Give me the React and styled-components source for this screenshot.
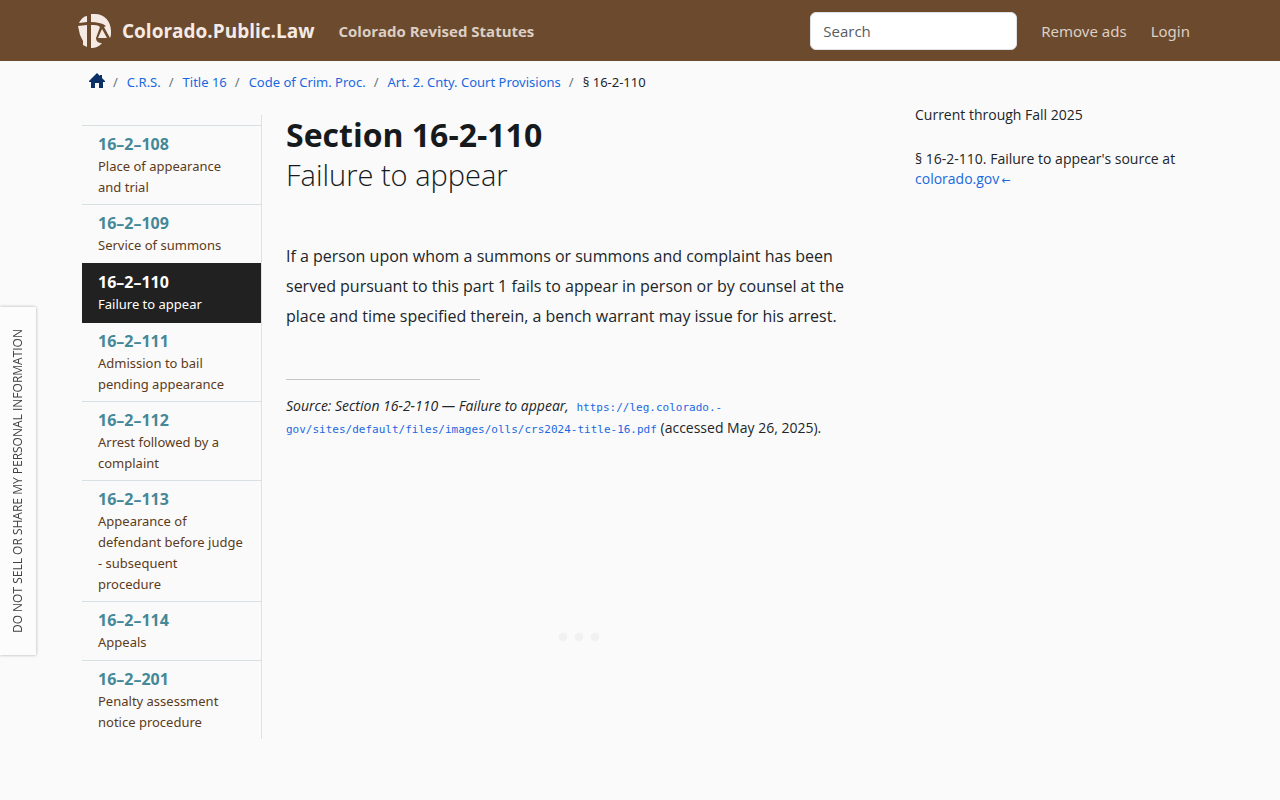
import styled, { createGlobalStyle } from "styled-components"

const GlobalStyle = createGlobalStyle`
    * {
        box-sizing: border-box;
    }
    body {
        margin: 0;
        background-color: #fafafa;
        color: #212529;
        font-family: "Open Sans", "Segoe UI", sans-serif;
        font-size: 15px;
        line-height: 24px;
    }
    a {
        color: #1a68e0;
        text-decoration: none;
    }
`

const Container = styled.div`
    max-width: 1140px;
    margin: 0 auto;
    padding: 0 12px;
`

const Header = styled.header`
    background-color: #6c4a2e;
`

const Navbar = styled(Container)`
    display: flex;
    align-items: center;
    height: 61px;
    padding: 0 8px;
`

const Brand = styled.a`
    display: flex;
    align-items: center;
    gap: 10px;
    color: #f5ebe4;
    font-size: 19px;
    font-weight: 700;
`

const NavLink = styled.a`
    margin-left: 24px;
    color: #dccfc4;
    font-weight: ${({ $bold }) => ($bold ? 700 : 400)};
`

const SearchForm = styled.form`
    margin-left: auto;
`

const SearchInput = styled.input`
    display: block;
    width: 207px;
    height: 38px;
    padding: 0 12px;
    border: 1px solid #dee2e6;
    border-radius: 6px;
    background-color: #fff;
    font: inherit;

    &::placeholder {
        color: #595c5f;
        opacity: 1;
    }
`

const LoginLinks = styled.div`
    padding-right: 12px;
    font-family: "Noto Sans", "Segoe UI", sans-serif;
`

const Breadcrumb = styled.ol`
    display: flex;
    align-items: center;
    height: 42px;
    margin: 0 0 2px;
    padding: 0 7px;
    list-style: none;
    font-family: "Noto Sans", "Segoe UI", sans-serif;
    font-size: 13px;

    li + li::before {
        content: "/";
        padding: 0 9px 0 8px;
        color: #6c757d;
    }
    svg {
        display: block;
    }
`

const Layout = styled.div`
    display: grid;
    grid-template-columns: 180px minmax(0, 1fr) 283px;
    column-gap: 24px;
    align-items: start;
`

const SideNav = styled.nav`
    margin-top: 10px;
    padding-top: 10px;
    border-right: 1px solid #dee2e6;
`

const SideItem = styled.a`
    display: block;
    min-height: 59px;
    padding: 8px 16px 6px;
    border-top: 1px solid #d9e0e3;
    color: #5c3a21;
    font-family: "Noto Sans", "Segoe UI", sans-serif;
    font-size: 13px;
    line-height: 21px;
    white-space: pre-line;

    strong {
        display: block;
        margin-bottom: 1px;
        color: #458898;
        font-family: "Open Sans", "Segoe UI", sans-serif;
        font-size: 16px;
        line-height: 21px;
    }

    &[aria-current="page"] {
        border-top-color: #212121;
        background-color: #212121;
        color: #fff;
    }
    &[aria-current="page"] strong {
        color: #fff;
    }
    &[aria-current="page"] + a {
        border-top-color: #212121;
    }
`

const Main = styled.main`
    margin-top: 10px;
    padding-right: 20px;
`

const Title = styled.h1`
    margin: 0 0 46px;
    color: #161a1d;
    font-size: 32px;
    font-weight: 700;
    line-height: 40px;
`

const Subtitle = styled.span`
    display: block;
    font-size: 29px;
    font-weight: 300;
`

const Statute = styled.p`
    margin: 0 0 48px;
    font-size: 16px;
    line-height: 30px;
`

const Rule = styled.hr`
    width: 194px;
    margin: 0 0 15px;
    border: 0;
    border-top: 1px solid #c4c5c6;
`

const Source = styled.p`
    margin: 0;
    font-size: 14px;
    line-height: 22px;

    a {
        margin-left: 4px;
        font-family: "DejaVu Sans Mono", monospace;
        font-size: 11px;
        line-height: 16px;
    }
`

const Aside = styled.aside`
    font-size: 14px;
    line-height: 20px;

    p {
        margin: 0 0 24px;
    }
    small {
        margin-left: 2px;
        font-family: "DejaVu Sans", sans-serif;
        font-size: 11px;
        line-height: 16px;
    }
`

const Dots = styled.div`
    display: flex;
    gap: 8px;
    justify-content: center;
    margin-top: 194px;

    span {
        width: 8px;
        height: 8px;
        border-radius: 50%;
        background-color: #f1f1f1;
    }
`

const PrivacyTab = styled.button`
    position: fixed;
    left: 0;
    top: 307px;
    width: 36px;
    padding: 22px 0;
    border: 0;
    background-color: #fcfcfc;
    box-shadow: 0 0 3px rgba(0, 0, 0, 0.3);
    color: #404040;
    font-family: inherit;
    font-size: 12px;
    line-height: 36px;
    text-transform: uppercase;
    writing-mode: vertical-rl;

    span {
        display: block;
        transform: rotate(180deg);
    }
`

const crumbs = ["C.R.S.", "Title 16", "Code of Crim. Proc.", "Art. 2. Cnty. Court Provisions"]

const sections = [
    { number: "16–2–108", title: "Place of appearance and trial" },
    { number: "16–2–109", title: "Service of summons" },
    { number: "16–2–110", title: "Failure to appear", active: true },
    { number: "16–2–111", title: "Admission to bail pending appearance" },
    { number: "16–2–112", title: "Arrest followed by a complaint" },
    { number: "16–2–113", title: "Appearance of defendant before judge - subsequent\nprocedure" },
    { number: "16–2–114", title: "Appeals" },
    { number: "16–2–201", title: "Penalty assessment notice procedure" },
]

// scales of justice inside a disc
const Logo = () => (
    <svg width="34" height="34" viewBox="0 0 34 34" fill="#f5ebe4" aria-hidden="true">
        <path d="M1 9 C3 5 6 2 9 2 V8 Z" />
        <path d="M13 0 H17 C26 0 33 7 33 17 C33 20 33 22 32 24 L26 13 L28 12 C24 9 19 8 13 8 Z" />
        <path d="M0 12 L9 11 V33 L5 31 V27 L2 21 Z" />
        <path d="M13 11 C17 11 20 11 22 13 L18 24 C18 27 20 29 24 29 C21 33 17 34 13 34 Z" />
        <path d="M24 15 L29 24 H20 Z" />
    </svg>
)

const HomeIcon = () => (
    <svg width="16" height="18" viewBox="0 0 16 18" fill="#0b3068" aria-hidden="true">
        <path d="M8 0 L11 3 V2 H13 V5 L16 8 V9 H14 V15 H10 V10 H6 V15 H2 V9 H0 V8 Z" />
    </svg>
)

const App = () => {
    return (
        <>
            <GlobalStyle />
            <Header>
                <Navbar>
                    <Brand href="#">
                        <Logo />
                        Colorado.Public.Law
                    </Brand>
                    <NavLink href="#" $bold>Colorado Revised Statutes</NavLink>
                    <SearchForm>
                        <SearchInput type="search" placeholder="Search" aria-label="Search" />
                    </SearchForm>
                    <LoginLinks>
                        <NavLink href="#">Remove ads</NavLink>
                        <NavLink href="#">Login</NavLink>
                    </LoginLinks>
                </Navbar>
            </Header>
            <Container>
                <Breadcrumb>
                    <li>
                        <a href="#" aria-label="Home"><HomeIcon /></a>
                    </li>
                    {crumbs.map((crumb) => (
                        <li key={crumb}><a href="#">{crumb}</a></li>
                    ))}
                    <li>§ 16-2-110</li>
                </Breadcrumb>
                <Layout>
                    <SideNav>
                        {sections.map(({ number, title, active }) => (
                            <SideItem href="#" key={number} aria-current={active ? "page" : undefined}>
                                <strong>{number}</strong>
                                {title}
                            </SideItem>
                        ))}
                    </SideNav>
                    <Main>
                        <Title>
                            Section 16-2-110
                            <Subtitle>Failure to appear</Subtitle>
                        </Title>
                        <Statute>
                            If a person upon whom a summons or summons and complaint has been served
                            pursuant to this part 1 fails to appear in person or by counsel at the
                            place and time specified therein, a bench warrant may issue for his arrest.
                        </Statute>
                        <Rule />
                        <Source>
                            <i>Source: Section 16-2-110 — Failure to appear,</i>{" "}
                            <a href="#">https://leg.colorado.-<wbr />gov/sites/default/files/images/olls/crs2024-title-16.pdf</a>{" "}
                            (accessed May 26, 2025).
                        </Source>
                        <Dots>
                            <span />
                            <span />
                            <span />
                        </Dots>
                    </Main>
                    <Aside>
                        <p>Current through Fall 2025</p>
                        <p>
                            § 16-2-110. Failure to appear's source at{" "}
                            <a href="#">colorado.gov<small>←</small></a>
                        </p>
                    </Aside>
                </Layout>
            </Container>
            <PrivacyTab>
                <span>Do not sell or share my personal information</span>
            </PrivacyTab>
        </>
    )
}

export default App
